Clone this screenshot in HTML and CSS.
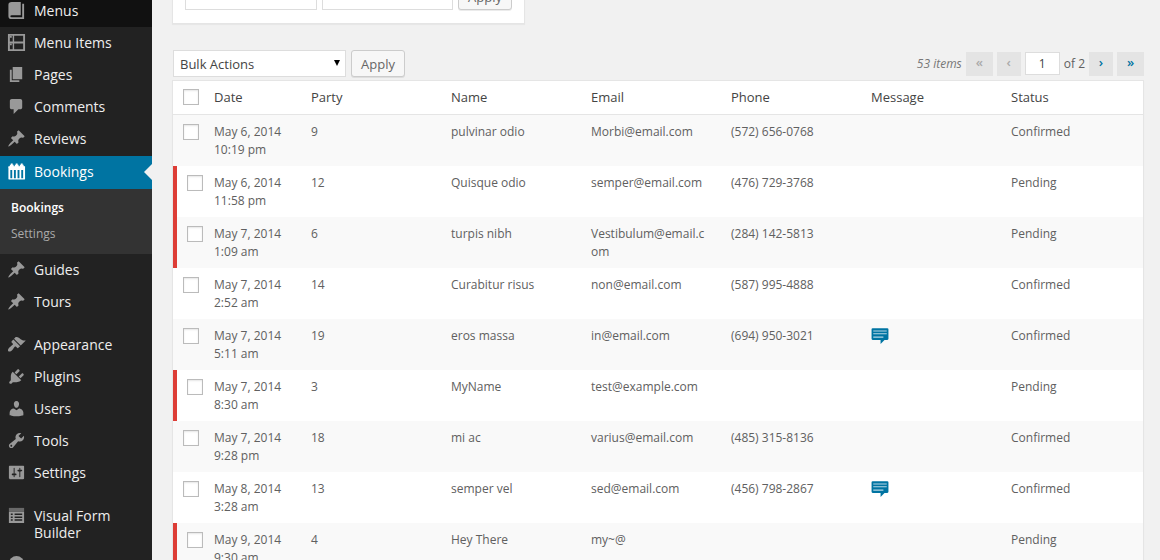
FILE: index.html
```html
<!DOCTYPE html>
<html lang="en">
<head>
<meta charset="utf-8">
<title>Bookings</title>
<link rel="stylesheet" href="styles.css">
</head>
<body>
<svg class="sprite" aria-hidden="true">
  <symbol id="i-book" viewBox="0 0 20 20"><path d="M5 1h9.500v14H5q-1.500 0-1.500 1T5 17h11V3h2v16H5q-3.500 0-3.500-3V4Q1.500 1 5 1z"/></symbol>
  <symbol id="i-items" viewBox="0 0 20 20"><path fill-rule="evenodd" d="M1 1h18v18H1zM3 3v6h3V3zM7.500 3v6H17V3zM3 11v6h3v-6zM7.500 11v6H17v-6z"/><path d="M3 3h2v2H3zM3 11h2v2H3z"/></symbol>
  <symbol id="i-page" viewBox="0 0 20 20"><path d="M6 15V2h10v13H6zm-1 1h8v2H3V5h2v11z"/></symbol>
  <symbol id="i-comment" viewBox="0 0 20 20"><path d="M5 2h9c1.100 0 2 .9 2 2v7c0 1.100-.9 2-2 2h-2l-5 5v-5H5c-1.100 0-2-.9-2-2V4c0-1.100.9-2 2-2z"/></symbol>
  <symbol id="i-pin" viewBox="0 0 20 20"><path d="M10.440 3.020l1.820-1.820 6.360 6.350-1.830 1.820c-1.050-.68-2.480-.57-3.410.36l-.75.75c-.92.93-1.040 2.350-.35 3.410l-1.830 1.820-2.410-2.410-2.800 2.790c-.42.42-3.380 2.710-3.800 2.290s1.860-3.390 2.280-3.810l2.790-2.790L4.100 9.360l1.830-1.820c1.050.69 2.480.57 3.400-.36l.75-.75c.93-.92 1.050-2.350.36-3.410z"/></symbol>
  <symbol id="i-calendar" viewBox="0 0 20 20"><path fill-rule="evenodd" d="M2 5h16.500q.5 0 .5.500V18q0 .5-.5.500H2q-.5 0-.5-.5V5.500Q1.500 5 2 5zM3.500 8.500V17h2V8.500zM7.300 8.500V17h2V8.500zM11.100 8.500V17h2V8.500zM15 8.500V17h2V8.500z"/><path d="M4 1.500h2V4H4zM9.200 1.500h2V4h-2zM14.500 1.500h2V4h-2z"/><path d="M1.500 4.500H3V3h4v1.500h1.200V3h4v1.500h1.300V3h4v1.500H19V6H1.500z"/></symbol>
  <symbol id="i-brush" viewBox="0 0 20 20"><path d="M14.480 11.060L7.410 3.990l1.500-1.500c.5-.56 2.300-.47 3.510.32 1.210.8 1.430 1.280 2.910 2.100 1.180.64 2.450 1.260 4.450.85zm-.71.71L6.700 4.700 4.930 6.470c-.39.39-.39 1.020 0 1.410l1.060 1.060c.39.39.39 1.030 0 1.420-.6.6-1.430 1.110-2.210 1.690-.35.26-.7.53-1.010.84C1.430 14.230.4 16.080 1.400 17.070c.99 1 2.840-.03 4.180-1.360.31-.31.58-.66.85-1.020.57-.78 1.080-1.610 1.690-2.210.39-.39 1.020-.39 1.410 0l1.060 1.060c.39.39 1.020.39 1.410 0z"/></symbol>
  <symbol id="i-plug" viewBox="0 0 20 20"><path d="M13.110 4.360L9.870 7.600 8 5.730l3.240-3.240c.35-.34 1.050-.2 1.560.32.52.51.66 1.210.31 1.550zm-8 1.770l.91-1.120 9.010 9.010-1.190.84c-.71.71-2.630 1.160-3.820 1.160H6.140L4.900 17.260c-.59.59-1.540.59-2.120 0-.59-.58-.59-1.530 0-2.120l1.240-1.240v-3.880c0-1.130.4-3.190 1.090-3.890zm7.260 3.970l3.240-3.240c.34-.35 1.040-.21 1.550.31.52.51.66 1.210.31 1.550l-3.240 3.250z"/></symbol>
  <symbol id="i-user" viewBox="0 0 20 20"><path d="M10 9.250c-2.270 0-2.730-3.440-2.730-3.440C7 4.020 7.820 2 9.970 2c2.160 0 2.980 2.020 2.710 3.810 0 0-.41 3.440-2.680 3.440zm0 2.570L12.720 10c2.390 0 4.520 2.330 4.520 4.530v2.490s-3.650 1.130-7.240 1.130c-3.650 0-7.240-1.130-7.240-1.130v-2.490c0-2.250 1.940-4.480 4.470-4.480z"/></symbol>
  <symbol id="i-wrench" viewBox="0 0 20 20"><path d="M16.680 9.770c-1.340 1.340-3.300 1.670-4.950.99l-5.410 6.520c-.99.99-2.590.99-3.580 0s-.99-2.590 0-3.570l6.520-5.420c-.68-1.650-.35-3.610.99-4.950 1.280-1.280 3.120-1.620 4.720-1.060l-2.890 2.890 2.820 2.820 2.860-2.870c.53 1.580.18 3.390-1.080 4.650zM3.810 16.210c.4.39 1.040.39 1.430 0 .4-.4.4-1.040 0-1.430-.39-.4-1.030-.4-1.430 0-.39.39-.39 1.030 0 1.430z"/></symbol>
  <symbol id="i-sliders" viewBox="0 0 20 20"><path d="M18 16V4c0-.55-.45-1-1-1H3c-.55 0-1 .45-1 1v12c0 .55.45 1 1 1h14c.55 0 1-.45 1-1zM8 11h1c.55 0 1 .45 1 1s-.45 1-1 1H8v1.500c0 .28-.22.5-.5.5s-.5-.22-.5-.5V13H6c-.55 0-1-.45-1-1s.45-1 1-1h1V5.500c0-.28.22-.5.5-.5s.5.22.5.5V11zm5-2h-1c-.55 0-1-.45-1-1s.45-1 1-1h1V5.500c0-.28.22-.5.5-.5s.5.22.5.5V7h1c.55 0 1 .45 1 1s-.45 1-1 1h-1v5.500c0 .28-.22.5-.5.5s-.5-.22-.5-.5V9z"/></symbol>
  <symbol id="i-form" viewBox="0 0 20 20"><path opacity=".6" d="M2 2h16v4H2z"/><path fill-rule="evenodd" d="M2 6h16v12H2zM4 8v1.500h2V8zM8 8v1.500h8V8zM4 11v1.500h2V11zM8 11v1.500h8V11zM4 14v1.500h2V14zM8 14v1.500h8V14z"/></symbol>
  <symbol id="i-circle" viewBox="0 0 20 20"><circle cx="10" cy="9" r="8"/></symbol>
  <symbol id="i-message" viewBox="0 0 16 16"><path d="M1.500 1h13q1 0 1 1v8.500q0 1-1 1H12L8.500 15v-3.500h-7q-1 0-1-1V2q0-1 1-1z"/><path d="M2 3h12v1H2zM2 5.500h12v1H2zM2 8.500h9v1H2z" fill="#b5d6e5"/></symbol>
</svg>
<div class="layout">
  <nav class="sidebar">
    <a class="item open" href="#"><svg class="icon"><use href="#i-book"/></svg>Menus</a>
    <a class="item" href="#"><svg class="icon"><use href="#i-items"/></svg>Menu Items</a>
    <a class="item" href="#"><svg class="icon"><use href="#i-page"/></svg>Pages</a>
    <a class="item" href="#"><svg class="icon"><use href="#i-comment"/></svg>Comments</a>
    <a class="item" href="#"><svg class="icon"><use href="#i-pin"/></svg>Reviews</a>
    <a class="item current" href="#"><svg class="icon"><use href="#i-calendar"/></svg>Bookings</a>
    <div class="submenu">
      <a class="sub selected" href="#">Bookings</a>
      <a class="sub" href="#">Settings</a>
    </div>
    <a class="item" href="#"><svg class="icon"><use href="#i-pin"/></svg>Guides</a>
    <a class="item" href="#"><svg class="icon"><use href="#i-pin"/></svg>Tours</a>
    <a class="item first" href="#"><svg class="icon"><use href="#i-brush"/></svg>Appearance</a>
    <a class="item" href="#"><svg class="icon"><use href="#i-plug"/></svg>Plugins</a>
    <a class="item" href="#"><svg class="icon"><use href="#i-user"/></svg>Users</a>
    <a class="item" href="#"><svg class="icon"><use href="#i-wrench"/></svg>Tools</a>
    <a class="item" href="#"><svg class="icon"><use href="#i-sliders"/></svg>Settings</a>
    <a class="item first" href="#"><svg class="icon"><use href="#i-form"/></svg>Visual Form Builder</a>
    <a class="item" href="#" aria-label="More"><svg class="icon"><use href="#i-circle"/></svg></a>
  </nav>
  <main class="main">
    <form class="filter">
      <input class="field" type="text" aria-label="Start date">
      <input class="field" type="text" aria-label="End date">
      <button class="button" type="button">Apply</button>
    </form>
    <div class="tablenav">
      <div class="picker"><select class="bulk" aria-label="Bulk actions"><option>Bulk Actions</option></select></div>
      <button class="button" type="button">Apply</button>
      <div class="pager">
        <span class="count">53 items</span>
        <button class="page off" type="button" aria-label="First page">«</button>
        <button class="page narrow off" type="button" aria-label="Previous page">‹</button>
        <input class="number" type="text" value="1" aria-label="Current page">
        <span class="total">of 2</span>
        <button class="page narrow" type="button" aria-label="Next page">›</button>
        <button class="page" type="button" aria-label="Last page">»</button>
      </div>
    </div>
    <table class="bookings">
      <thead>
        <tr><th class="check"><input class="box" type="checkbox" aria-label="Select all"></th><th class="date">Date</th><th>Party</th><th>Name</th><th>Email</th><th>Phone</th><th>Message</th><th>Status</th></tr>
      </thead>
      <tbody>
        <tr><td class="check"><input class="box" type="checkbox" aria-label="Select pulvinar odio"></td><td>May 6, 2014 10:19 pm</td><td>9</td><td>pulvinar odio</td><td>Morbi@email.com</td><td>(572) 656-0768</td><td></td><td>Confirmed</td></tr>
        <tr class="pending"><td class="check"><input class="box" type="checkbox" aria-label="Select Quisque odio"></td><td>May 6, 2014 11:58 pm</td><td>12</td><td>Quisque odio</td><td>semper@email.com</td><td>(476) 729-3768</td><td></td><td>Pending</td></tr>
        <tr class="pending"><td class="check"><input class="box" type="checkbox" aria-label="Select turpis nibh"></td><td>May 7, 2014 1:09 am</td><td>6</td><td>turpis nibh</td><td>Vestibulum@email.com</td><td>(284) 142-5813</td><td></td><td>Pending</td></tr>
        <tr><td class="check"><input class="box" type="checkbox" aria-label="Select Curabitur risus"></td><td>May 7, 2014 2:52 am</td><td>14</td><td>Curabitur risus</td><td>non@email.com</td><td>(587) 995-4888</td><td></td><td>Confirmed</td></tr>
        <tr><td class="check"><input class="box" type="checkbox" aria-label="Select eros massa"></td><td>May 7, 2014 5:11 am</td><td>19</td><td>eros massa</td><td>in@email.com</td><td>(694) 950-3021</td><td><a class="message" href="#" aria-label="View message"><svg class="bubble"><use href="#i-message"/></svg></a></td><td>Confirmed</td></tr>
        <tr class="pending"><td class="check"><input class="box" type="checkbox" aria-label="Select MyName"></td><td>May 7, 2014 8:30 am</td><td>3</td><td>MyName</td><td>test@example.com</td><td></td><td></td><td>Pending</td></tr>
        <tr><td class="check"><input class="box" type="checkbox" aria-label="Select mi ac"></td><td>May 7, 2014 9:28 pm</td><td>18</td><td>mi ac</td><td>varius@email.com</td><td>(485) 315-8136</td><td></td><td>Confirmed</td></tr>
        <tr><td class="check"><input class="box" type="checkbox" aria-label="Select semper vel"></td><td>May 8, 2014 3:28 am</td><td>13</td><td>semper vel</td><td>sed@email.com</td><td>(456) 798-2867</td><td><a class="message" href="#" aria-label="View message"><svg class="bubble"><use href="#i-message"/></svg></a></td><td>Confirmed</td></tr>
        <tr class="pending"><td class="check"><input class="box" type="checkbox" aria-label="Select Hey There"></td><td>May 9, 2014 9:30 am</td><td>4</td><td>Hey There</td><td>my~@</td><td></td><td></td><td>Pending</td></tr>
      </tbody>
    </table>
  </main>
</div>
</body>
</html>
```
FILE: styles.css
```css
* { box-sizing: border-box; }
body {
  margin: 0;
  background: #f1f1f1;
  color: #606060;
  font: 12px/18px "Open Sans", sans-serif;
}
a { text-decoration: none; }
input, button, select { font-family: inherit; margin: 0; }
.sprite { display: none; }
.layout { display: flex; height: 100vh; overflow: hidden; }

.sidebar { flex: none; width: 152px; margin-top: -5px; background: #222; }
.item {
  display: flex;
  align-items: flex-start;
  gap: 8px;
  min-height: 32px;
  padding: 7px 8px 8px 7px;
  color: #eee;
  font-size: 14px;
  line-height: 17px;
}
.icon { flex: none; width: 19px; height: 19px; margin: -1px 0; fill: #999; }
.open { background: #111; }
.first { margin-top: 11px; }
.current { position: relative; margin-top: 1px; min-height: 33px; background: #0074a2; color: #fff; }
.current .icon { fill: #fff; }
.current::after {
  content: "";
  position: absolute;
  right: 0;
  top: 8px;
  border: 8px solid transparent;
  border-left: 0;
  border-right-color: #f1f1f1;
}
.submenu { padding: 6px 0 7px; background: #333; }
.sub { display: block; padding: 4px 11px; color: #aaa; font-size: 12px; }
.selected { color: #fff; font-weight: 600; }

.main { flex: 1; min-width: 0; padding: 0 16px 0 20px; }
.filter {
  display: flex;
  gap: 5px;
  width: 353px;
  margin-top: -31px;
  padding: 13px 12px;
  background: #fff;
  border: 1px solid #e5e5e5;
  box-shadow: 0 1px 1px #0000000a;
}
.field { flex: 1; min-width: 0; height: 27px; border: 1px solid #ddd; background: #fff; }
.button {
  width: 54px;
  height: 27px;
  padding: 0;
  border: 1px solid #ccc;
  border-radius: 3px;
  background: #f7f7f7;
  box-shadow: 0 1px 0 #00000014;
  color: #666;
  font-size: 13px;
}
.tablenav { display: flex; align-items: center; gap: 5px; margin: 26px 0 3px 1px; }
.picker { position: relative; }
.picker::after {
  content: "";
  position: absolute;
  right: 6px;
  top: 10px;
  border: 3px solid transparent;
  border-top: 6px solid #000;
  border-bottom: 0;
  pointer-events: none;
}
.bulk {
  appearance: none;
  display: block;
  width: 173px;
  height: 27px;
  padding: 0 6px;
  border: 1px solid #ddd;
  border-radius: 0;
  background: #fff;
  color: #444;
  font-size: 13px;
}
.pager { display: flex; align-items: center; gap: 4px; margin-left: auto; }
.count { color: #777; font-style: italic; }
.page { width: 27px; height: 24px; padding: 0 0 3px; border: 0; background: #e4e4e4; color: #0074a2; font-size: 13px; font-weight: 600; }
.narrow { width: 24px; }
.off { color: #aaa; }
.number { width: 35px; height: 23px; padding: 0; border: 1px solid #ddd; background: #fff; color: #444; font-size: 12px; text-align: center; }

.bookings {
  width: 100%;
  table-layout: fixed;
  border: 1px solid #e5e5e5;
  border-spacing: 0;
  background: #fff;
  box-shadow: 0 1px 1px #0000000a;
}
.bookings th, .bookings td { padding: 8px 14px 7px 8px; text-align: left; vertical-align: top; overflow-wrap: break-word; }
.bookings th { padding-top: 7px; padding-bottom: 8px; border-bottom: 1px solid #e5e5e5; color: #444; font-size: 13px; font-weight: 400; }
.bookings .check { width: 33px; padding-left: 10px; padding-right: 0; }
.bookings .date { width: 97px; }
.bookings tbody tr:nth-child(odd) { background: #f9f9f9; }
.pending .check { border-left: 4px solid #dd3d36; }
.box {
  appearance: none;
  display: block;
  width: 16px;
  height: 16px;
  margin: 1px 0 0;
  border: 1px solid #bbb;
  background: #fff;
  box-shadow: inset 0 1px 2px #0000001a;
}
.message { display: block; width: 19px; }
.bubble { display: block; width: 18px; height: 18px; fill: #0074a2; }
```
